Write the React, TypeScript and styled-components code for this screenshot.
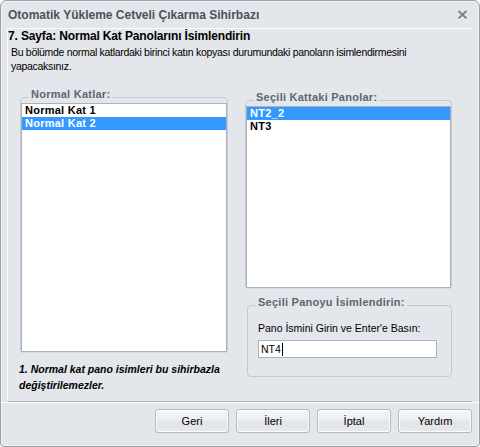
import React from 'react';
import styled, { createGlobalStyle } from 'styled-components';

const Global = createGlobalStyle`
  html, body { margin: 0; padding: 0; background: #ffffff; }
  body {
    font-family: "Liberation Sans", Arial, sans-serif;
    font-size: 10.5px;
    color: #000;
  }
  * { box-sizing: border-box; }
`;

const Window = styled.div`
  width: 480px;
  height: 447px;
  background: #e3e6ea;
  border: 1px solid #9aa2ad;
  border-radius: 6px 6px 4px 4px;
  box-shadow: inset 0 0 0 1px #f1f3f5;
  display: flex;
  flex-direction: column;
  overflow: hidden;
`;

const TitleBar = styled.div`
  height: 27px;
  flex: none;
  display: flex;
  align-items: center;
  justify-content: space-between;
  padding: 0 11px 0 7px;
`;

const Title = styled.div`
  font-weight: bold;
  font-size: 12px;
  color: #4a525e;
  line-height: 14px;
`;

const Close = styled.svg`
  width: 11px;
  height: 10px;
  display: block;
`;

const Panel = styled.div`
  height: 374px;
  flex: none;
  margin: 0 7px 0 6px;
  border-top: 1px solid #ffffff;
  border-left: 1px solid #f7f8f9;
  border-bottom: 1px solid #a9b0b9;
  display: flex;
  flex-direction: column;
`;

const Heading = styled.div`
  font-weight: bold;
  font-size: 12px;
  letter-spacing: -0.15px;
  line-height: 14px;
  color: #000;
`;

const Description = styled.div`
  margin: 2px 0 0 3px;
  line-height: 14px;
  letter-spacing: -0.3px;
  max-width: 425px;
`;

const Body = styled.div`
  display: flex;
  gap: 17px;
  margin-top: 24px;
  padding-left: 12px;
`;

const Column = styled.div<{ $w: number }>`
  width: ${(p) => p.$w}px;
  display: flex;
  flex-direction: column;
`;

const Group = styled.div<{ $h: number; $top?: number; $left?: number; $pad?: string }>`
  position: relative;
  height: ${(p) => p.$h}px;
  margin-top: ${(p) => p.$top ?? 0}px;
  margin-left: ${(p) => p.$left ?? 0}px;
  border: 1px solid #c4c9d0;
  border-radius: 4px;
  padding: ${(p) => p.$pad ?? '5px 0 0 0'};
  display: flex;
  flex-direction: column;
`;

const GroupLabel = styled.div`
  position: absolute;
  top: -10px;
  left: 8px;
  padding: 0 2px;
  background: #e3e6ea;
  font-weight: bold;
  font-size: 11px;
  letter-spacing: 0.25px;
  color: #5e6672;
  line-height: 13px;
`;

const List = styled.div`
  flex: 1;
  background: #ffffff;
  border: 1px solid #aab2bd;
  box-shadow: 0 1px 0 #d6dae0;
  display: flex;
  flex-direction: column;
`;

const Item = styled.div<{ $selected?: boolean }>`
  height: 13px;
  line-height: 13px;
  padding-left: 3px;
  font-weight: bold;
  font-size: 11px;
  letter-spacing: 0.25px;
  color: ${(p) => (p.$selected ? '#ffffff' : '#000000')};
  background: ${(p) => (p.$selected ? '#3399ff' : 'transparent')};
`;

const Footnote = styled.div`
  margin: 8px 0 0 -1px;
  font-weight: bold;
  font-style: italic;
  line-height: 16px;
  white-space: nowrap;
`;

const FieldLabel = styled.div`
  line-height: 14px;
`;

const TextBox = styled.div`
  margin-top: 5px;
  width: 179px;
  height: 18px;
  background: #ffffff;
  border: 1px solid #abb2bd;
  padding-left: 2px;
  line-height: 16px;
  display: flex;
  align-items: center;
`;

const Caret = styled.span`
  display: inline-block;
  width: 1px;
  height: 13px;
  background: #000;
  margin-left: 1px;
`;

const Footer = styled.div`
  flex: 1;
  display: flex;
  justify-content: flex-end;
  align-items: flex-start;
  gap: 7px;
  padding: 6px 7px 0 0;
  border-top: 1px solid #ffffff;
`;

const Button = styled.button`
  width: 74px;
  height: 24px;
  border: 1px solid #b5bac2;
  border-radius: 3px;
  background: linear-gradient(#f4f5f7 0%, #eceef1 45%, #e1e4e8 55%, #e6e8eb 100%);
  font-family: inherit;
  font-size: 11px;
  color: #000;
  padding: 0;
  box-shadow: inset 0 0 0 1px #fafbfc;
`;

export default function App() {
  return (
    <>
      <Global />
      <Window>
        <TitleBar>
          <Title>Otomatik Yükleme Cetveli Çıkarma Sihirbazı</Title>
          <Close viewBox="0 0 11 10">
            <path d="M1.5 2 L9.5 9.5 M9.5 2 L1.5 9.5" stroke="#ffffff" strokeWidth="2.2" fill="none" />
            <path d="M1.5 1 L9.5 8.5 M9.5 1 L1.5 8.5" stroke="#7b838f" strokeWidth="2.2" fill="none" />
          </Close>
        </TitleBar>
        <Panel>
          <Heading>7. Sayfa: Normal Kat Panolarını İsimlendirin</Heading>
          <Description>
            Bu bölümde normal katlardaki birinci katın kopyası durumundaki panoların isimlendirmesini yapacaksınız.
          </Description>
          <Body>
            <Column $w={208}>
              <Group $h={256}>
                <GroupLabel>Normal Katlar:</GroupLabel>
                <List>
                  <Item>Normal Kat 1</Item>
                  <Item $selected>Normal Kat 2</Item>
                </List>
              </Group>
              <Footnote>
                1. Normal kat pano isimleri bu sihirbazla
                <br />
                değiştirilemezler.
              </Footnote>
            </Column>
            <Column $w={207}>
              <Group $h={189} $top={3}>
                <GroupLabel>Seçili Kattaki Panolar:</GroupLabel>
                <List>
                  <Item $selected>NT2_2</Item>
                  <Item>NT3</Item>
                </List>
              </Group>
              <Group $h={72} $top={16} $left={2} $pad="15px 0 0 10px">
                <GroupLabel>Seçili Panoyu İsimlendirin:</GroupLabel>
                <FieldLabel>Pano İsmini Girin ve Enter'e Basın:</FieldLabel>
                <TextBox>
                  NT4
                  <Caret />
                </TextBox>
              </Group>
            </Column>
          </Body>
        </Panel>
        <Footer>
          <Button>Geri</Button>
          <Button>İleri</Button>
          <Button>İptal</Button>
          <Button>Yardım</Button>
        </Footer>
      </Window>
    </>
  );
}
